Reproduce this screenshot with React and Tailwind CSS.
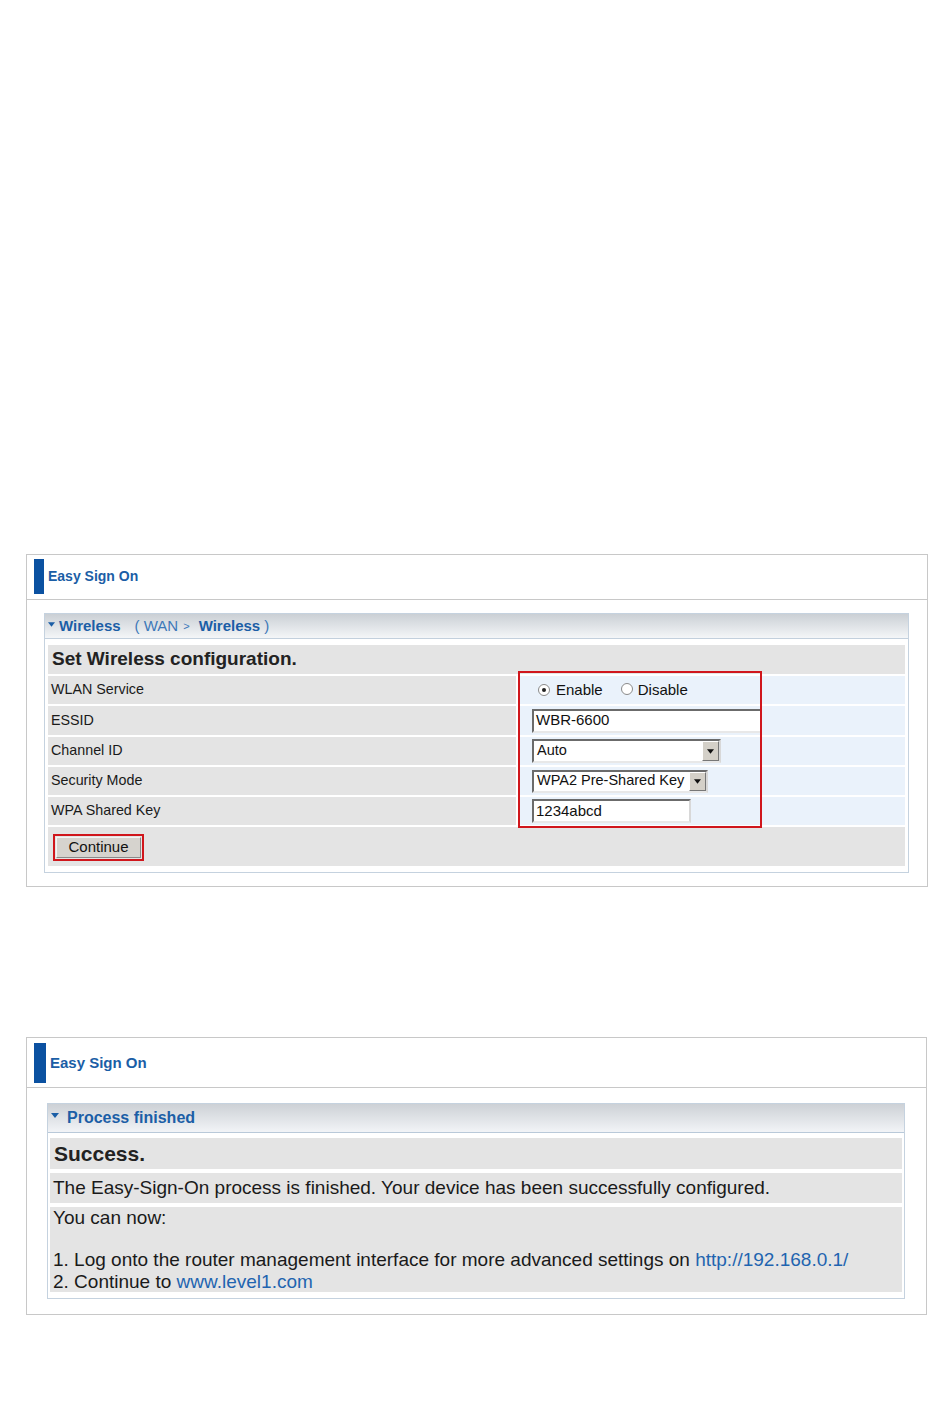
import React from 'react';

const font = { fontFamily: '"Liberation Sans", Arial, sans-serif' };

const Arrow = ({ className }) => (
  <svg viewBox="0 0 8 5" className={className}>
    <path d="M0 0h8L4 5z" fill="currentColor" />
  </svg>
);

const Radio = ({ checked }) => (
  <span className="inline-flex items-center justify-center w-[12px] h-[12px] rounded-full border border-[#8a8a8a] bg-white">
    {checked && <span className="w-[4px] h-[4px] rounded-full bg-[#222]" />}
  </span>
);

const TextBox = ({ value, width }) => (
  <div
    className={`h-[24px] bg-white border-2 border-t-[#6b6b6b] border-l-[#6b6b6b] border-r-[#d8d8d8] border-b-[#e8e8e8] flex items-center pl-[2px] text-[15px] text-[#111] ${width}`}
  >
    {value}
  </div>
);

const SelectBox = ({ value, width, height }) => (
  <div
    className={`bg-white border-2 border-t-[#6b6b6b] border-l-[#6b6b6b] border-r-[#d8d8d8] border-b-[#e8e8e8] flex items-center justify-between pl-[3px] text-[14.5px] text-[#111] ${width} ${height}`}
  >
    <span>{value}</span>
    <span className="w-[17px] h-full bg-[#d4d0c8] border border-t-white border-l-white border-r-[#777] border-b-[#777] flex items-center justify-center text-[#111]">
      <Arrow className="w-[7px] h-[5px]" />
    </span>
  </div>
);

const PanelHeader = ({ barH, barW, padTop, height, size }) => (
  <div className={`pl-[7px] border-b border-[#c8c8c8] ${padTop} ${height}`}>
    <div className="flex items-center">
      <div className={`bg-[#0b51a1] ${barW} ${barH}`} />
      <div className={`ml-[4px] font-bold text-[#1b5ea6] ${size}`}>Easy Sign On</div>
    </div>
  </div>
);

const Row = ({ label, children, height = 'h-[28px]' }) => (
  <div className={`grid grid-cols-[468px_1fr] gap-x-[2px] ${height}`}>
    <div className="bg-[#e4e4e4] flex items-center pl-[3px] text-[14.3px] text-[#1a1a1a]">{label}</div>
    <div className="bg-[#eaf2fb] flex items-center pl-[14px]">{children}</div>
  </div>
);

export default function App() {
  return (
    <div className="w-[950px] min-h-[1413px] bg-white pt-[554px]" style={font}>
      {/* wireless configuration panel */}
      <div className="ml-[26px] w-[902px] border border-[#c8c8c8]">
        <PanelHeader barH="h-[35px]" barW="w-[10px]" padTop="pt-[4px]" height="h-[45px]" size="text-[14px]" />
        <div className="pt-[13px] pb-[13px] pl-[17px]">
          <div className="w-[865px] border border-[#c5d2df]">
            <div className="h-[25px] border-b border-[#c3d0dd] bg-gradient-to-b from-[#cbd0d5] to-[#f4f6f8] flex items-center pl-[3px] text-[15px] text-[#1b5ea6]">
              <Arrow className="w-[7px] h-[5px] mr-[4px] mt-[-4px] text-[#1b5ea6]" />
              <span className="font-bold">Wireless</span>
              <span className="ml-[14px] text-[#3d78b8]">( WAN</span>
              <span className="ml-[5px] text-[#3d78b8] text-[11px]">&gt;</span>
              <span className="ml-[9px] font-bold">Wireless</span>
              <span className="ml-[4px] text-[#3d78b8]">)</span>
            </div>
            <div className="relative flex flex-col gap-[2px] px-[3px] pt-[6px] pb-[6px]">
              <div className="h-[29px] bg-[#e4e4e4] flex items-center pl-[4px] text-[19px] font-bold text-[#222]">
                Set Wireless configuration.
              </div>
              <Row label="WLAN Service">
                <div className="flex items-center text-[15px] text-[#111] pl-[6px]">
                  <Radio checked />
                  <span className="ml-[6px]">Enable</span>
                  <span className="ml-[18px]"><Radio /></span>
                  <span className="ml-[5px]">Disable</span>
                </div>
              </Row>
              <Row label="ESSID" height="h-[29px]">
                <TextBox value="WBR-6600" width="w-[230px]" />
              </Row>
              <Row label="Channel ID">
                <SelectBox value="Auto" width="w-[189px]" height="h-[24px]" />
              </Row>
              <Row label="Security Mode">
                <SelectBox value="WPA2 Pre-Shared Key" width="w-[176px]" height="h-[23px]" />
              </Row>
              <Row label="WPA Shared Key">
                <TextBox value="1234abcd" width="w-[159px]" />
              </Row>
              <div className="h-[39px] bg-[#e4e4e4] flex items-start pl-[5px] pt-[7px]">
                <div className="w-[91px] h-[27px] border-2 border-[#d0161c] p-[1px]">
                  <div className="w-full h-full bg-[#d6d3ce] border border-t-[#f4f4f4] border-l-[#f4f4f4] border-r-[#8a8a8a] border-b-[#8a8a8a] flex items-center justify-center text-[15px] text-[#111]">
                    Continue
                  </div>
                </div>
              </div>
              <div className="absolute left-[473px] top-[32px] w-[244px] h-[157px] border-2 border-[#d0161c]" />
            </div>
          </div>
        </div>
      </div>

      {/* process finished panel */}
      <div className="ml-[26px] mt-[150px] w-[901px] border border-[#c8c8c8]">
        <PanelHeader barH="h-[40px]" barW="w-[12px]" padTop="pt-[5px]" height="h-[50px]" size="text-[15px]" />
        <div className="pt-[15px] pb-[15px] pl-[20px]">
          <div className="w-[858px] border border-[#c5d2df]">
            <div className="h-[29px] border-b border-[#b9c9d9] bg-gradient-to-b from-[#cdd1d6] to-[#f2f4f7] flex items-center pl-[3px] text-[16px] font-bold text-[#1b5ea6]">
              <Arrow className="w-[8px] h-[5px] mr-[8px] mt-[-5px]" />
              Process finished
            </div>
            <div className="flex flex-col gap-[4px] px-[2px] pt-[5px] pb-[6px] text-[19px] text-[#1a1a1a]">
              <div className="h-[31px] bg-[#e4e4e4] flex items-center pl-[4px] text-[21px] font-bold text-[#222]">
                Success.
              </div>
              <div className="h-[30px] bg-[#e4e4e4] flex items-center pl-[3px]">
                The Easy-Sign-On process is finished. Your device has been successfully configured.
              </div>
              <div className="h-[85px] bg-[#e4e4e4] pl-[3px] leading-[22px]">
                <div>You can now:</div>
                <div className="h-[20px]" />
                <div>
                  1. Log onto the router management interface for more advanced settings on{' '}
                  <span className="text-[#1f64b0]">http://192.168.0.1/</span>
                </div>
                <div>
                  2. Continue to <span className="text-[#1f64b0]">www.level1.com</span>
                </div>
              </div>
            </div>
          </div>
        </div>
      </div>
    </div>
  );
}
